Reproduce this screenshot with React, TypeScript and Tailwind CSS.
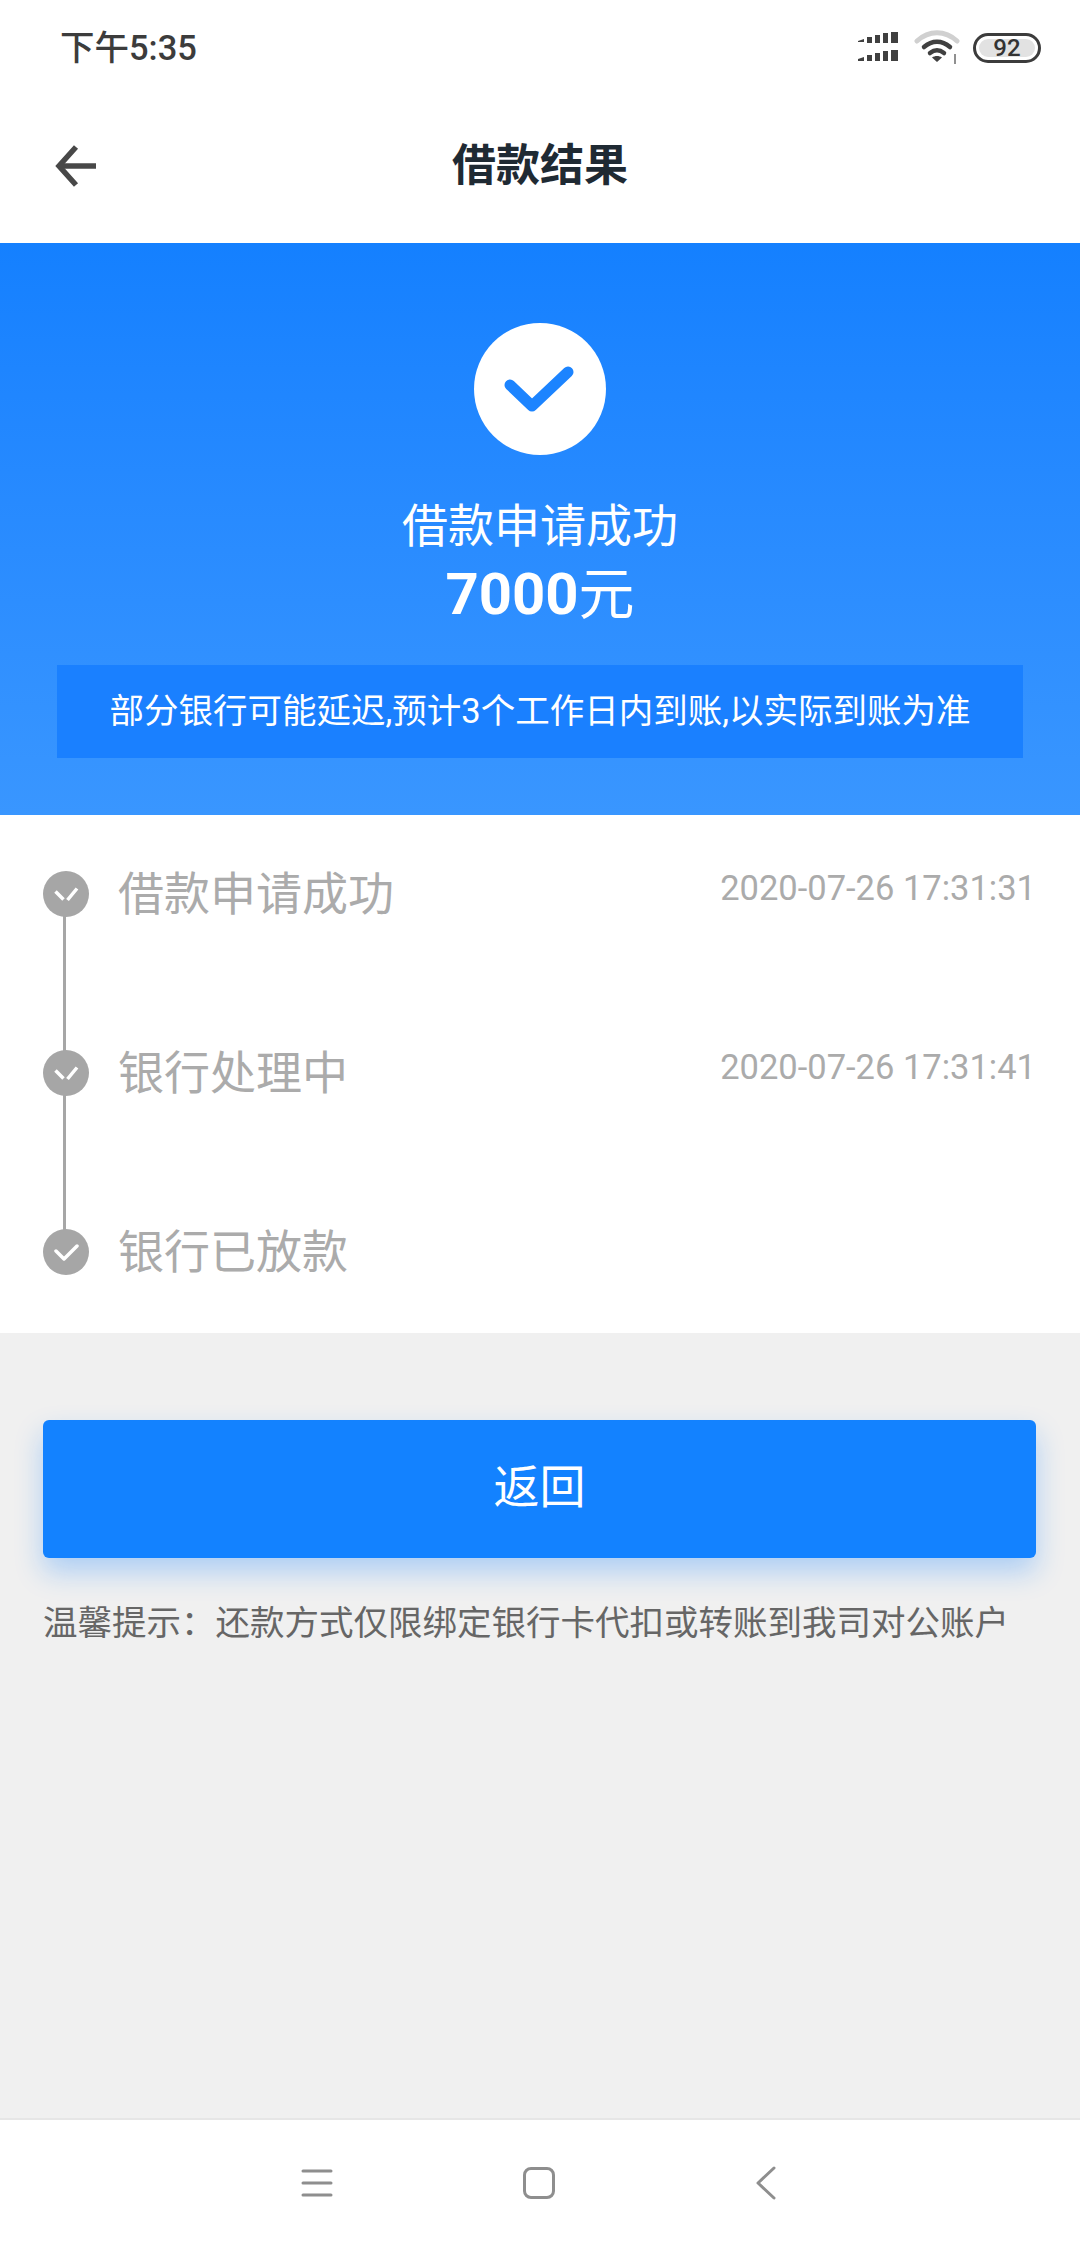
const FONT = "[font-family:Roboto,'Noto_Sans_CJK_SC',sans-serif]";

const steps = [
  { label: "借款申请成功", time: "2020-07-26 17:31:31", split: true },
  { label: "银行处理中", time: "2020-07-26 17:31:41", split: true },
  { label: "银行已放款", time: "", split: false },
];

function StatusBar() {
  return (
    <div className="flex h-[80px] items-center justify-between pl-[60px] pr-[39px] pt-[16px]">
      <span className="text-[34.500px] font-medium leading-none text-[#3c3c3c]">下午5:35</span>
      <div className="flex items-center">
        <svg width="42" height="32" viewBox="0 0 42 32" fill="#404040">
          <path d="M0 10h6V7l-6 2zM9 11h5V5H9zM17 11h5V3h-5zM25 11h5V1h-5zM33 11h7V0h-7z" />
          <path d="M0 29h6v-4l-6 2zM9 29h5v-6H9zM17 29h5v-8h-5zM25 29h5V19h-5zM33 29h7V18h-7z" />
        </svg>
        <svg className="ml-[14px]" width="46" height="36" viewBox="0 0 46 36" fill="none">
          <path d="M3 11C15 0 31 0 43 11" stroke="#d0d0d0" strokeWidth="5" strokeLinecap="round" />
          <path d="M10 17c8-7 18-7 26 0" stroke="#404040" strokeWidth="4.500" strokeLinecap="round" />
          <path d="M16 23c4.500-3.500 9.500-3.500 14 0" stroke="#404040" strokeWidth="4.500" strokeLinecap="round" />
          <path d="M23 32l-5-4.500c3-2 7-2 10 0z" fill="#404040" />
          <path d="M41 24v10" stroke="#909090" strokeWidth="2" />
        </svg>
        <div className="ml-[13px] flex h-[30px] w-[68px] items-center justify-center rounded-[15px] border-[3px] border-[#3c3c3c] p-[3px]">
          <div className="flex h-full w-full items-center justify-center rounded-[10px] bg-[#e2e2e2] text-[24px] font-medium leading-none text-[#333333]">92</div>
        </div>
      </div>
    </div>
  );
}

function Header() {
  return (
    <div className="relative flex h-[163px] items-center justify-center pt-[9px]">
      <svg className="absolute left-[55px] top-[64px]" width="42" height="44" viewBox="0 0 42 44" fill="none" stroke="#484848" strokeWidth="5.500">
        <path d="M21 3L4 22l17 19" />
        <path d="M4 22h37" />
      </svg>
      <h1 className="text-[44px] font-bold leading-none text-[#1f2a33]">借款结果</h1>
    </div>
  );
}

function Banner() {
  return (
    <div className="flex h-[572px] flex-col items-center bg-gradient-to-b from-[#1480ff] to-[#3996ff] px-[57px] pt-[80px] text-white">
      <div className="flex size-[132px] items-center justify-center rounded-full bg-white">
        <svg className="mt-[6px]" width="72" height="52" viewBox="0 0 72 52" fill="none">
          <path d="M6 19l22 21L64 6" stroke="#1c84ff" strokeWidth="11" strokeLinecap="round" strokeLinejoin="round" />
        </svg>
      </div>
      <p className="mt-[41px] text-[46px] leading-[60px]">借款申请成功</p>
      <p className="mt-[8px] flex items-baseline leading-[60px]">
        <span className="text-[58px] font-bold">7000</span>
        <span className="text-[56px]">元</span>
      </p>
      <div className="mt-[40px] flex h-[93px] w-full items-center justify-center bg-[#1a80ff] text-[34.500px]">
        部分银行可能延迟,预计3个工作日内到账,以实际到账为准
      </div>
    </div>
  );
}

function Timeline() {
  return (
    <div className="h-[518px] bg-white pl-[43px] pr-[44px] pt-[56px]">
      {steps.map((step, i) => (
        <div key={step.label} className="relative flex h-[179px] items-start">
          {i < steps.length - 1 && <div className="absolute left-[20px] top-[40px] h-[150px] w-[3px] bg-[#a6a6a6]" />}
          <div className="relative flex size-[46px] shrink-0 items-center justify-center rounded-full bg-[#a6a6a6]">
            <svg width="26" height="18" viewBox="0 0 26 18" fill="none" stroke="white" strokeWidth="3.500">
              {step.split ? (
                <path d="M2.500 6.500l8 8M14.500 15L24 3.500" />
              ) : (
                <path d="M3 8l8 8L24 3" strokeLinecap="round" strokeLinejoin="round" />
              )}
            </svg>
          </div>
          <span className="ml-[29px] text-[46px] leading-[46px] text-[#ababab]">{step.label}</span>
          <span className="ml-auto text-[34.500px] leading-[34px] text-[#ababab]">{step.time}</span>
        </div>
      ))}
    </div>
  );
}

function NavBar() {
  return (
    <div className="flex h-[130px] items-center border-t-[2px] border-[#e6e6e6] bg-white pb-[2px] pl-[301px]">
      <svg width="32" height="30" viewBox="0 0 32 30" fill="none" stroke="#8e8e8e" strokeWidth="3" strokeLinecap="round">
        <path d="M2 3h28M2 15h28M2 27h28" />
      </svg>
      <div className="ml-[190px] size-[32px] rounded-[8px] border-[3px] border-[#8e8e8e]" />
      <svg className="ml-[201px]" width="20" height="34" viewBox="0 0 20 34" fill="none" stroke="#8e8e8e" strokeWidth="3" strokeLinecap="round" strokeLinejoin="round">
        <path d="M18 2L2 17l16 15" />
      </svg>
    </div>
  );
}

export default function App() {
  return (
    <div className={`flex h-[2248px] w-[1080px] flex-col overflow-hidden bg-white ${FONT}`}>
      <StatusBar />
      <Header />
      <Banner />
      <Timeline />
      <div className="flex-1 bg-[#f0f0f0] px-[43px] pt-[87px]">
        <button className="flex h-[138px] w-[993px] items-center justify-center rounded-[6px] bg-[#1382ff] pb-[4px] text-[46px] text-white shadow-[0_14px_28px_rgba(19,130,255,0.3)]">
          返回
        </button>
        <p className="mt-[45px] whitespace-nowrap text-[34.500px] leading-[40px] text-[#666666]">
          温馨提示：还款方式仅限绑定银行卡代扣或转账到我司对公账户
        </p>
      </div>
      <NavBar />
    </div>
  );
}
